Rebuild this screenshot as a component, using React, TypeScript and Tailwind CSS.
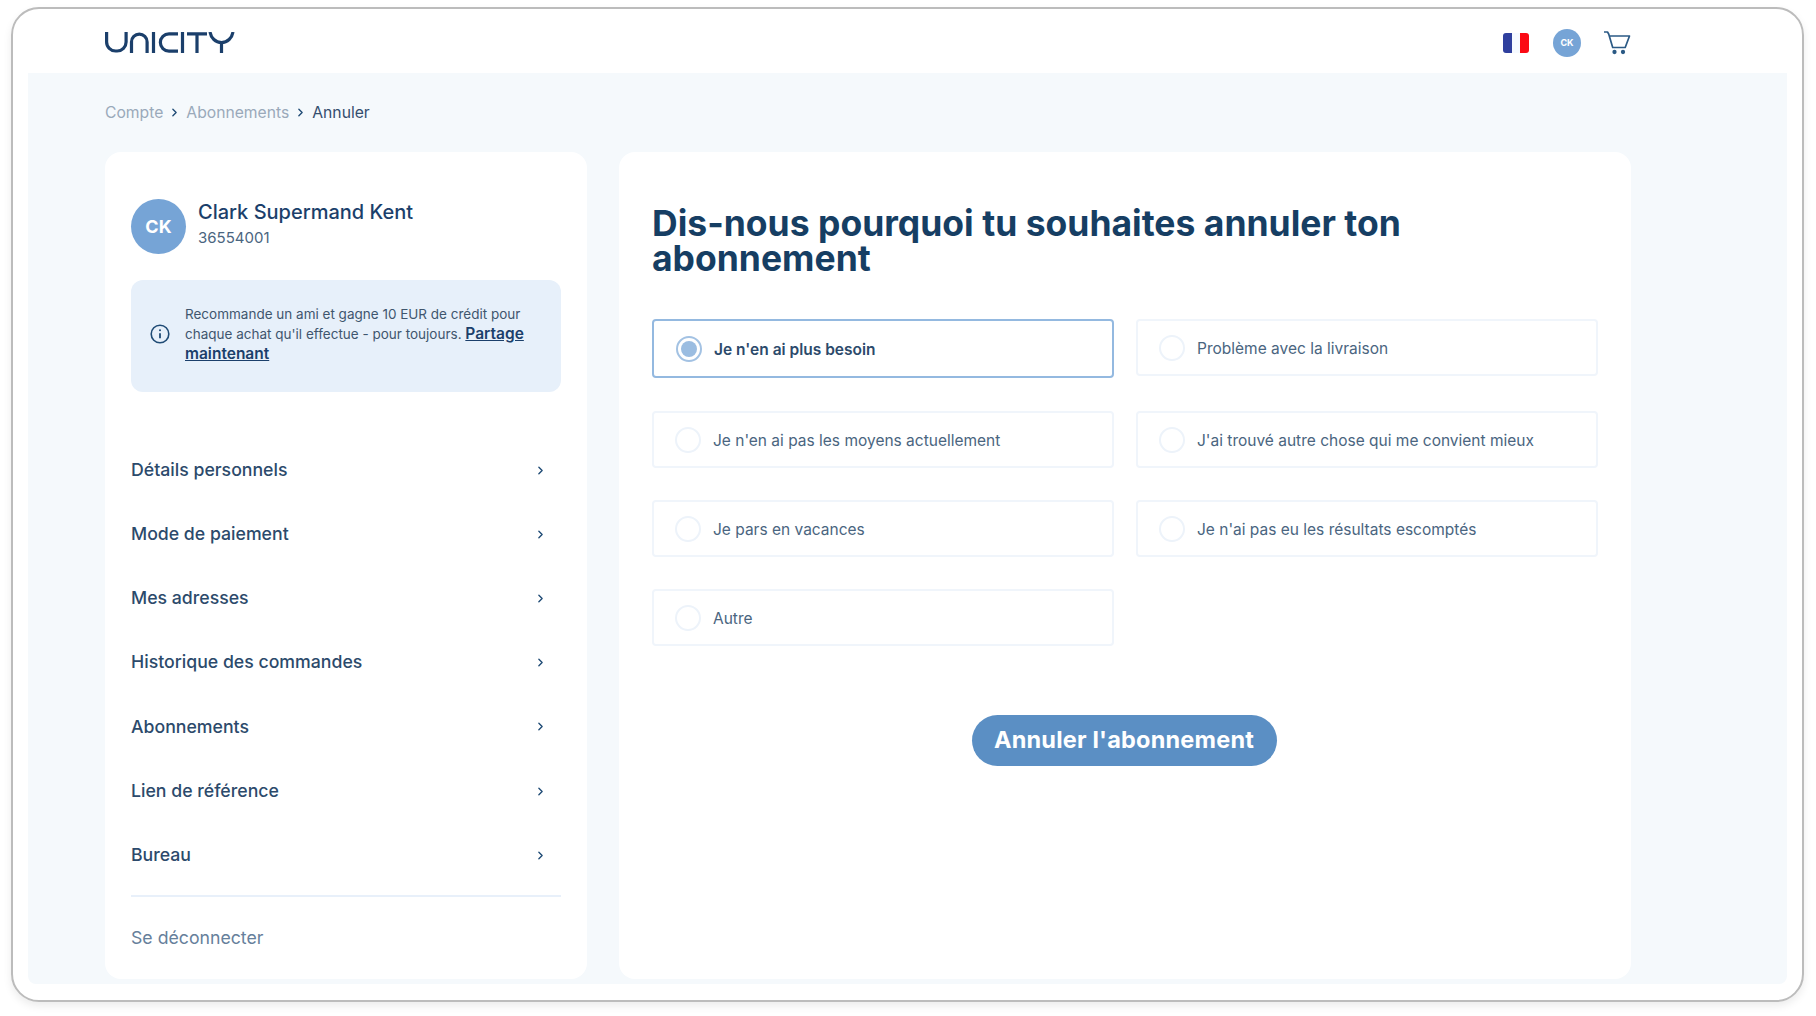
import { ChevronRight } from 'lucide-react';

const navItems = [
  'Détails personnels',
  'Mode de paiement',
  'Mes adresses',
  'Historique des commandes',
  'Abonnements',
  'Lien de référence',
  'Bureau',
];

const reasons = [
  { label: "Je n'en ai plus besoin", selected: true },
  { label: 'Problème avec la livraison' },
  { label: "Je n'en ai pas les moyens actuellement" },
  { label: "J'ai trouvé autre chose qui me convient mieux" },
  { label: 'Je pars en vacances' },
  { label: "Je n'ai pas eu les résultats escomptés" },
  { label: 'Autre' },
];

function Logo() {
  return (
    <svg width="130" height="22" viewBox="0 0 130 22" fill="none" stroke="#1b3f6b" strokeWidth="3.200">
      <path d="M1.600 0v10a9 9 0 0 0 9 9h1.500a9 9 0 0 0 9-9V0" />
      <path d="M26.500 21V10a7.800 7.800 0 0 1 15.600 0v11" />
      <path d="M48.500 0v21" />
      <path d="M73 1.800h-9a8.600 8.600 0 0 0 0 17.300h9" />
      <path d="M77.500 0v21" />
      <path d="M82 1.800h20M92 2v19" />
      <path d="M105 0c1 6 5.500 10.500 11.500 10.500S127 6 128 0M116.500 10v11" />
    </svg>
  );
}

function Flag() {
  return (
    <div className="flex h-5 w-[26px] overflow-hidden rounded-[3px]">
      <div className="flex-1 bg-[#2f3f9e]" />
      <div className="flex-1 bg-[#f6faff]" />
      <div className="flex-1 bg-[#fb0a14]" />
    </div>
  );
}

function Cart() {
  return (
    <svg width="28" height="24" viewBox="0 0 28 24" fill="none" stroke="#2b5a85" strokeWidth="1.700">
      <path d="M1 1h3.500l1.200 2 4 13.500h12.500L26.500 5H6.500" strokeLinejoin="round" />
      <circle cx="11.500" cy="21" r="1.300" fill="#2b5a85" />
      <circle cx="20" cy="21" r="1.300" fill="#2b5a85" />
    </svg>
  );
}

function InfoIcon() {
  return (
    <svg width="20" height="20" viewBox="0 0 20 20" fill="none" stroke="#1f4b75" strokeWidth="1.600" className="shrink-0">
      <circle cx="10" cy="10" r="8.800" />
      <path d="M10 9.200v5" strokeWidth="1.800" />
      <circle cx="10" cy="6.200" r="1" fill="#1f4b75" stroke="none" />
    </svg>
  );
}

function ReasonOption({ label, selected }: { label: string; selected?: boolean }) {
  return (
    <div
      className={
        selected
          ? 'mb-[1px] flex h-[59px] items-center rounded-[4px] border-2 border-[#94b9e0] pl-[22px]'
          : 'flex h-[57px] items-center rounded-[4px] border-2 border-[#f0f5fb] pl-[21px]'
      }
    >
      {selected ? (
        <div className="flex h-[26px] w-[26px] items-center justify-center rounded-full border-2 border-[#a3c2e3]">
          <div className="h-[16px] w-[16px] rounded-full bg-[#9bbde1]" />
        </div>
      ) : (
        <div className="h-[26px] w-[26px] rounded-full border-2 border-[#edf3fa]" />
      )}
      <span
        className={
          selected
            ? 'ml-[12px] pt-[2px] text-[15.500px] font-semibold text-[#2c4a6b]'
            : 'ml-[12px] pt-[3px] text-[15.500px] text-[#4a6580]'
        }
      >
        {label}
      </span>
    </div>
  );
}

export default function App() {
  return (
    <div className="h-[1016px] w-[1816px] overflow-hidden bg-white pl-[11px] pt-[7px] font-['Inter',sans-serif]">
      <div className="h-[995px] w-[1793px] rounded-[28px] border-2 border-[#bcbcbc] shadow-[0_4px_8px_rgba(0,0,0,0.08)]">
        {/* Header */}
        <header className="flex h-[64px] items-center justify-between pl-[92px] pr-[171px]">
          <div className="pt-[3px]">
            <Logo />
          </div>
          <div className="flex items-center pt-[4px]">
            <Flag />
            <div className="ml-[24px] flex h-7 w-7 items-center justify-center rounded-full bg-[#76a4d6] text-[9px] font-bold text-white">
              CK
            </div>
            <div className="ml-[22px]">
              <Cart />
            </div>
          </div>
        </header>

        <main className="mx-[15px] h-[911px] rounded-b-[8px] bg-[#f5f9fc] pl-[77px]">
          {/* Breadcrumb */}
          <nav className="flex h-[79px] items-center text-[15.700px]">
            <span className="text-[#9aa9ba]">Compte</span>
            <ChevronRight size={13} strokeWidth={2.500} className="mx-[5px] text-[#1f4b75]" />
            <span className="text-[#9aa9ba]">Abonnements</span>
            <ChevronRight size={13} strokeWidth={2.500} className="mx-[5px] text-[#1f4b75]" />
            <span className="text-[#334d6e]">Annuler</span>
          </nav>

          <div className="flex gap-[32px]">
            {/* Sidebar */}
            <aside className="h-[827px] w-[482px] rounded-[16px] bg-white px-[26px] pt-[47px]">
              <div className="flex items-center">
                <div className="flex h-[55px] w-[55px] items-center justify-center rounded-full bg-[#76a4d6] text-[18px] font-bold text-white">
                  CK
                </div>
                <div className="ml-[12px] pb-[4px]">
                  <div className="text-[20px] font-[550] leading-[25px] text-[#1b3f6b]">Clark Supermand Kent</div>
                  <div className="text-[15px] leading-[25px] text-[#4a6580]">36554001</div>
                </div>
              </div>

              <div className="mt-[26px] flex h-[112px] w-[430px] items-center rounded-[12px] bg-[#e7f0fa] pb-[4px] pl-[19px] pr-[24px]">
                <InfoIcon />
                <p className="ml-[15px] text-[13.500px] leading-[20px] text-[#3f566e]">
                  Recommande un ami et gagne 10 EUR de crédit pour chaque achat qu'il effectue - pour toujours.{' '}
                  <a className="text-[15.500px] font-semibold text-[#1b3f6b] underline">Partage maintenant</a>
                </p>
              </div>

              <ul className="mt-[46px]">
                {navItems.map((item) => (
                  <li key={item} className="flex h-[64.200px] items-center justify-between pr-[14px]">
                    <span className="text-[17.700px] font-medium text-[#2c4a6b]">{item}</span>
                    <ChevronRight size={13} strokeWidth={2.500} className="text-[#1f4b75]" />
                  </li>
                ))}
              </ul>

              <div className="mt-[8px] w-[430px] border-t-2 border-[#e8f0fa] pt-[29px] text-[17.700px] leading-[24px] text-[#66809b]">
                Se déconnecter
              </div>
            </aside>

            {/* Cancel form */}
            <section className="h-[827px] w-[1012px] rounded-[16px] bg-white pl-[33px] pr-[32px] pt-[54px]">
              <h1 className="text-[35.500px] font-bold leading-[35px] text-[#163e63]">
                Dis-nous pourquoi tu souhaites annuler ton
                <br />
                abonnement
              </h1>

              <div className="mt-[43px] grid grid-cols-[462px_462px] items-start gap-x-[22px] gap-y-[32px]">
                {reasons.map((r) => (
                  <ReasonOption key={r.label} label={r.label} selected={r.selected} />
                ))}
              </div>

              <div className="mt-[69px] flex justify-center pr-[3px]">
                <button className="h-[51px] w-[305px] rounded-full bg-[#5b8fc4] pb-[2px] text-[23.500px] font-bold tracking-[0.2px] text-white">
                  Annuler l'abonnement
                </button>
              </div>
            </section>
          </div>
        </main>
      </div>
    </div>
  );
}
